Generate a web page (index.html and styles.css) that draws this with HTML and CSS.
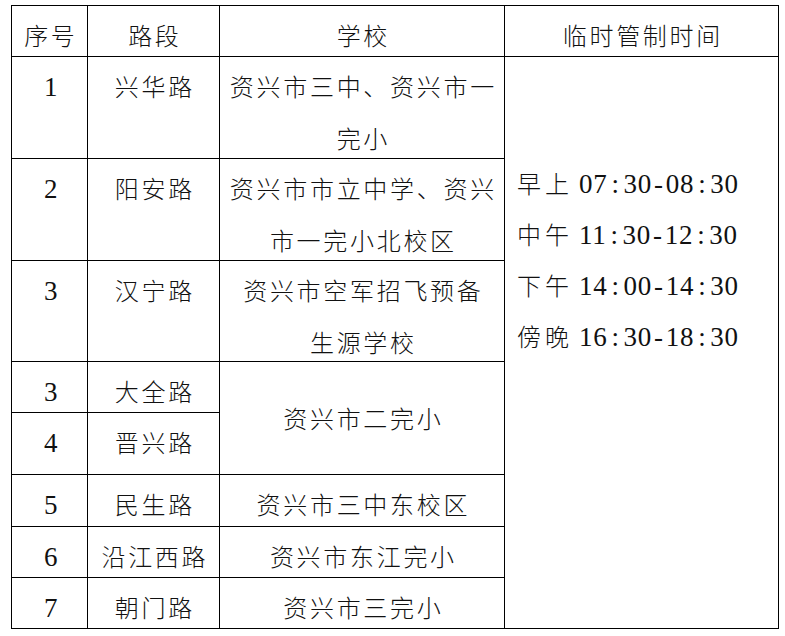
FILE: index.html
```html
<!DOCTYPE html>
<html lang="zh-CN">
<head>
<meta charset="utf-8">
<title>临时管制时间</title>
<link rel="stylesheet" href="styles.css">
</head>
<body>
<div class="page">
  <div class="table">
    <div class="cell">序号</div>
    <div class="cell">路段</div>
    <div class="cell">学校</div>
    <div class="cell">临时管制时间</div>

    <div class="cell"><span class="n">1</span></div>
    <div class="cell">兴华路</div>
    <div class="cell">资兴市三中、资兴市一<br>完小</div>
    <div class="cell times">
      <div class="tline"><span class="cn">早上</span><span class="num">07<span class="c">:</span>30<span class="d">-</span>08<span class="c">:</span>30</span></div>
      <div class="tline"><span class="cn">中午</span><span class="num">11<span class="c">:</span>30<span class="d">-</span>12<span class="c">:</span>30</span></div>
      <div class="tline"><span class="cn">下午</span><span class="num">14<span class="c">:</span>00<span class="d">-</span>14<span class="c">:</span>30</span></div>
      <div class="tline"><span class="cn">傍晚</span><span class="num">16<span class="c">:</span>30<span class="d">-</span>18<span class="c">:</span>30</span></div>
    </div>

    <div class="cell"><span class="n">2</span></div>
    <div class="cell">阳安路</div>
    <div class="cell">资兴市市立中学、资兴<br>市一完小北校区</div>

    <div class="cell"><span class="n">3</span></div>
    <div class="cell">汉宁路</div>
    <div class="cell">资兴市空军招飞预备<br>生源学校</div>

    <div class="cell"><span class="n">3</span></div>
    <div class="cell">大全路</div>
    <div class="cell merged">资兴市二完小</div>

    <div class="cell"><span class="n">4</span></div>
    <div class="cell">晋兴路</div>

    <div class="cell"><span class="n">5</span></div>
    <div class="cell">民生路</div>
    <div class="cell">资兴市三中东校区</div>

    <div class="cell"><span class="n">6</span></div>
    <div class="cell">沿江西路</div>
    <div class="cell">资兴市东江完小</div>

    <div class="cell"><span class="n">7</span></div>
    <div class="cell">朝门路</div>
    <div class="cell">资兴市三完小</div>
  </div>
</div>
</body>
</html>
```

FILE: styles.css
```css
html, body {
  margin: 0;
  padding: 0;
  background: #fff;
}

.page {
  padding: 5px 0 0 11px;
}

.table {
  display: grid;
  grid-template-columns: 75px 131px 284px 273px;
  grid-template-rows: 50px 101px 101px 100px 50px 61px 51px 50px 50px;
  gap: 1px;
  padding: 1px;
  background: #000;
  width: max-content;
  font-family: "Noto Sans CJK SC", "Noto Sans", sans-serif;
  font-weight: 300;
  font-size: 24px;
  color: #111;
}

.cell {
  background: #fff;
  text-align: center;
  padding: 3px 0 0 2.7px;
  line-height: 52px;
  letter-spacing: 2.7px;
  white-space: nowrap;
  overflow: hidden;
}

.n {
  font-family: "Liberation Serif", "Times New Roman", serif;
  font-weight: 400;
  font-size: 27px;
  letter-spacing: 0;
  line-height: 1;
}

.merged {
  grid-row: span 2;
  display: flex;
  align-items: center;
  justify-content: center;
  padding-top: 0;
}

.times {
  grid-row: span 8;
  text-align: left;
  padding: 100px 0 0 12px;
  line-height: 51px;
}

.tline {
  height: 51px;
}

.cn {
  letter-spacing: 4px;
}

.num {
  font-family: "Liberation Serif", "Times New Roman", serif;
  font-weight: 400;
  font-size: 27px;
  letter-spacing: 0.7px;
  line-height: 1;
  margin-left: 6px;
}

.c {
  padding: 0 4px;
}

.d {
  padding: 0 2px;
}
```
